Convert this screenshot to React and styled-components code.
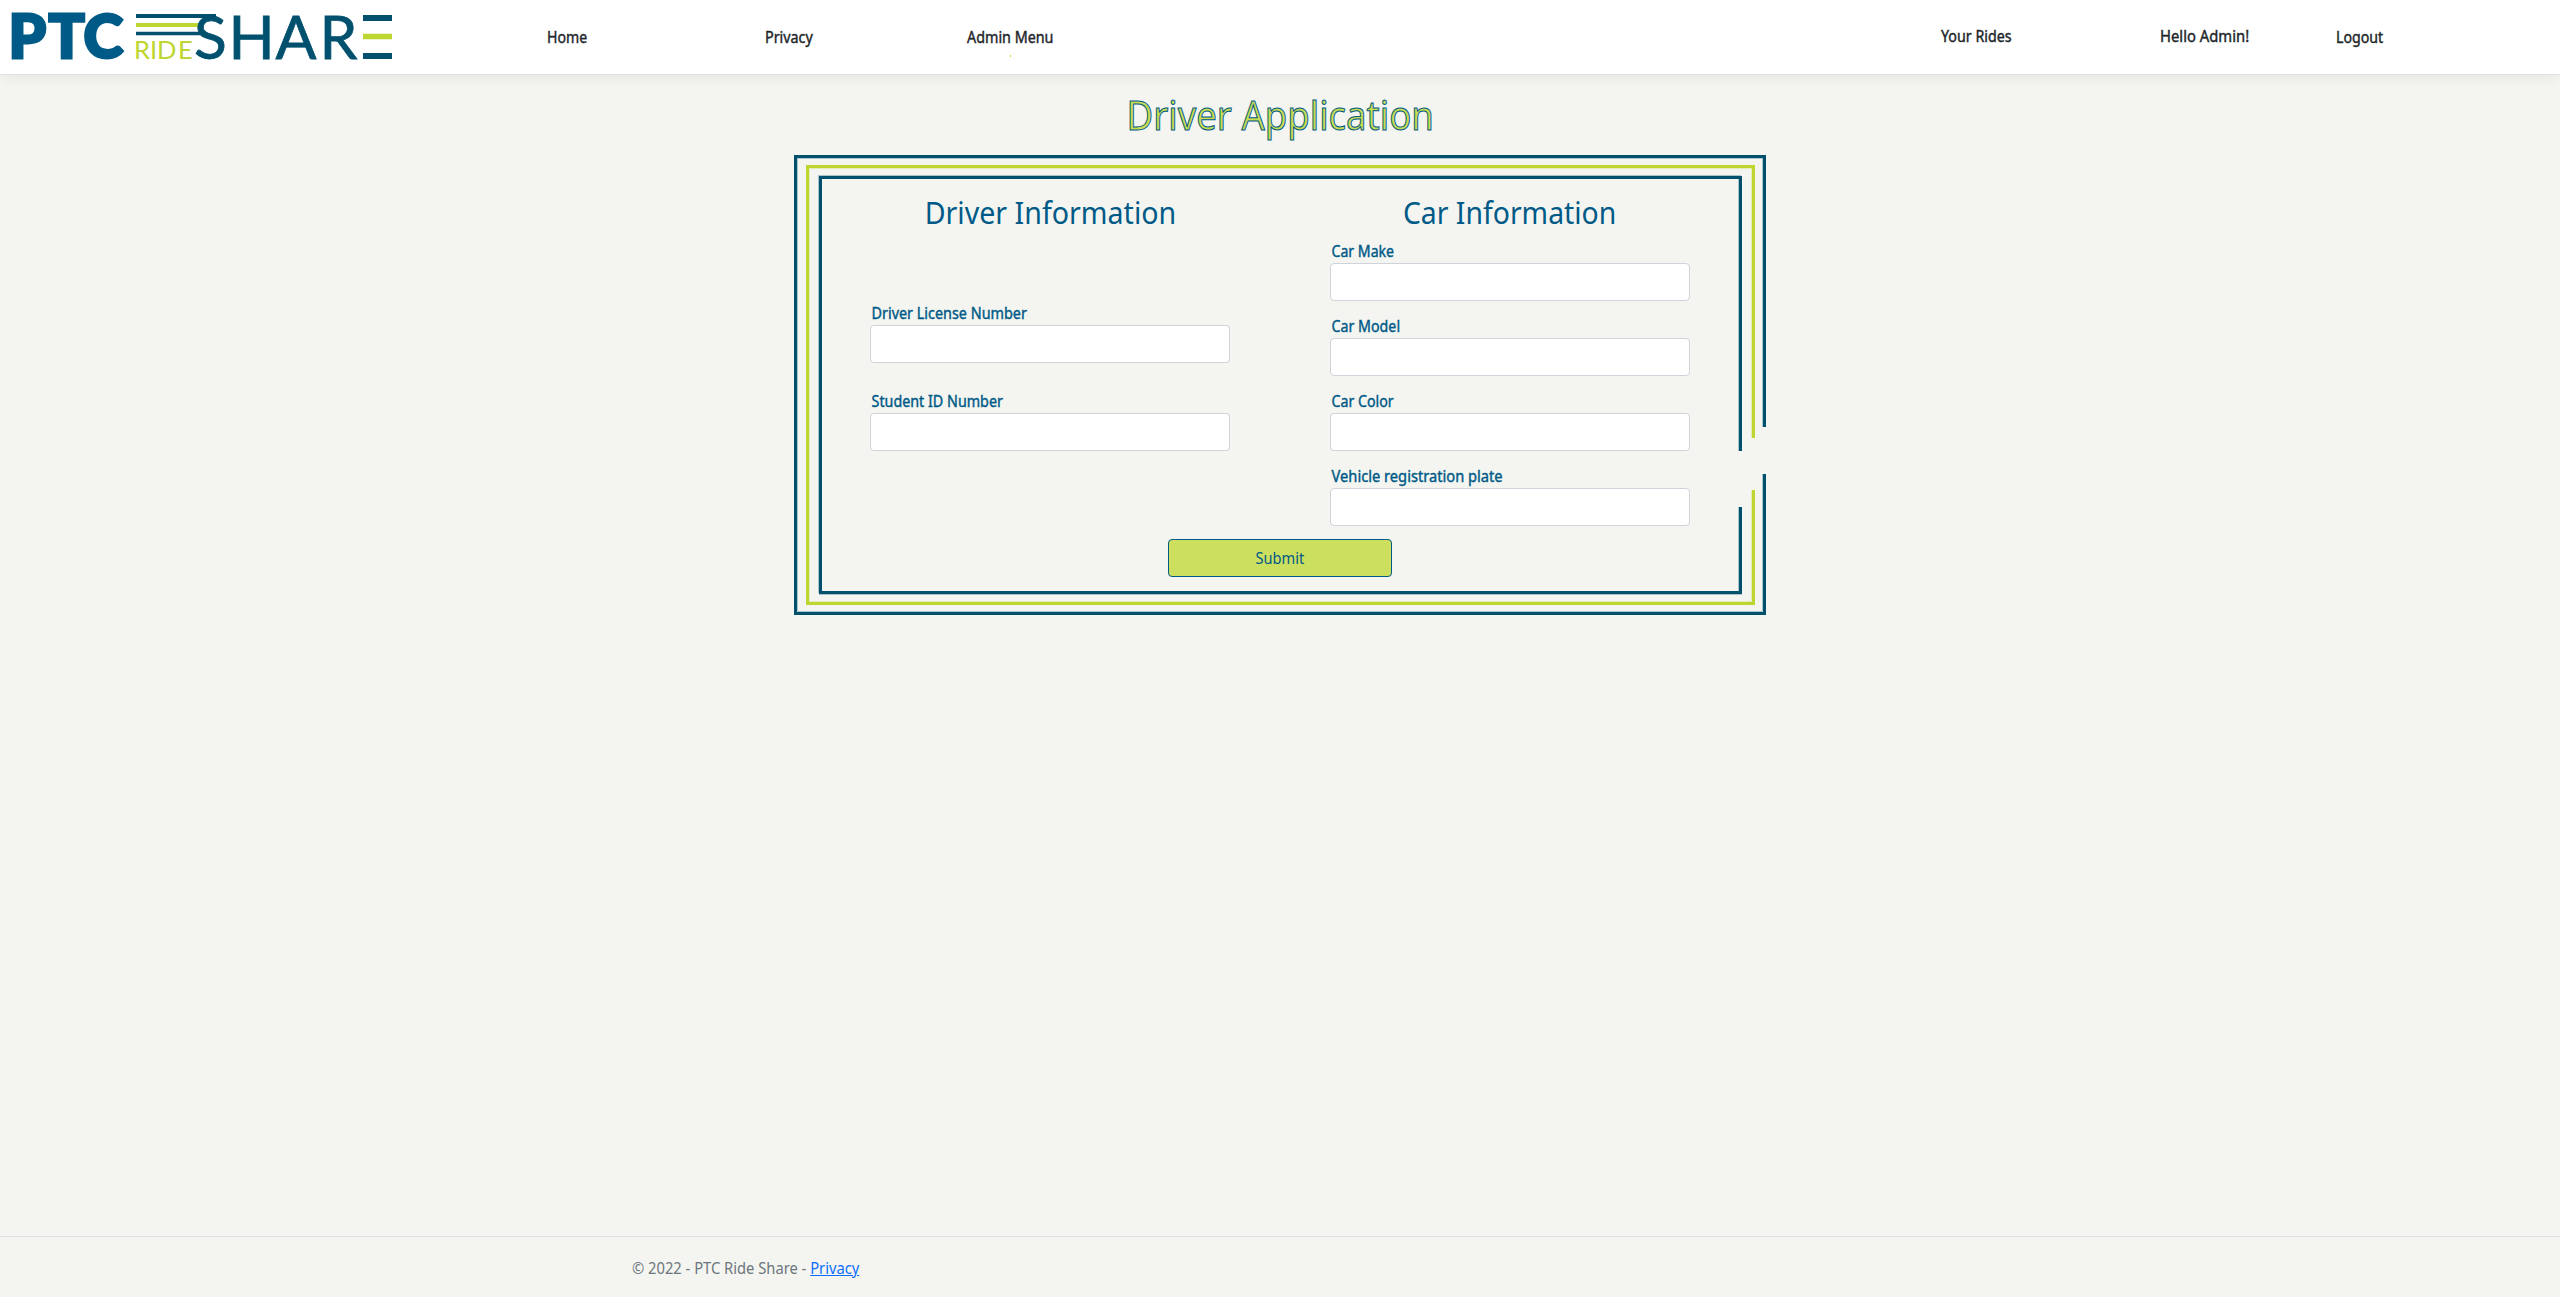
import React from "react";
import styled, { createGlobalStyle } from "styled-components";

const navy = "#00506e";
const blue = "#005a87";
const lime = "#bed62f";
const paper = "#f4f5f0";

const GlobalStyle = createGlobalStyle`
  *, *::before, *::after { box-sizing: border-box; }
  body {
    margin: 0;
    background: ${paper};
    color: #212529;
    font-family: "Noto Sans", "Open Sans", sans-serif;
    font-size: 15.5px;
    line-height: 24px;
  }
`;

const Page = styled.div`
  display: flex;
  flex-direction: column;
  height: 1297px;
`;

const Condensed = styled.span`
  display: inline-block;
  transform: scaleX(${(p) => p.$ratio});
  transform-origin: ${(p) => p.$origin || "left"} center;
  white-space: nowrap;
`;

const Header = styled.header`
  display: grid;
  grid-template-columns: 547px 218px 202px 974px 219px 176px 1fr;
  height: 75px;
  padding-top: 25px;
  background: #fff;
  border-bottom: 1px solid #dee2e6;
  box-shadow: 0 4px 12px rgba(0, 0, 0, 0.05);
`;

const Brand = styled.a`
  display: block;
  height: 74px;
  margin-top: -25px;
`;

const NavLink = styled.a`
  color: #212529;
  -webkit-text-stroke: 0.4px #212529;
  margin-top: ${(p) => (p.$raised ? -1 : 0)}px;
`;

const Caret = styled.span`
  display: block;
  width: 1px;
  height: 2px;
  margin: 6px 0 0 43px;
  background: ${lime};
`;

const Main = styled.main`
  display: flex;
  flex: 1;
  flex-direction: column;
  align-items: center;
`;

const Title = styled.h1`
  margin: 16px 0;
  height: 48px;
  color: #c8dc50;
  font-size: 39.5px;
  font-weight: 400;
  line-height: 48px;
  -webkit-text-stroke: 1px ${blue};
`;

const Rule = styled.div`
  position: relative;
  border: 3px solid ${(p) => p.$color};
  box-shadow: ${(p) => p.$edge};
  &::after {
    content: "";
    position: absolute;
    right: -4px;
    top: ${(p) => p.$gapTop}px;
    width: 6px;
    height: ${(p) => p.$gap}px;
    background: ${paper};
  }
`;

const OuterRule = styled(Rule)`
  width: 972px;
  height: 460px;
  padding: 7px 8px 7px 9px;
`;

const MiddleRule = styled(Rule)`
  height: 440px;
  padding: 8px 10px;
`;

const InnerRule = styled(Rule)`
  height: 418px;
  padding-right: 1px;
`;

const Form = styled.form`
  display: flex;
  flex-direction: column;
  align-items: center;
`;

const Columns = styled.div`
  display: grid;
  grid-template-columns: 360px 360px;
  column-gap: 100px;
  height: 360px;
  padding-top: 14px;
`;

const Column = styled.section`
  display: flex;
  flex-direction: column;
`;

const Heading = styled.h2`
  margin: 0 0 8px;
  height: 38px;
  color: ${blue};
  font-size: 31px;
  font-weight: 400;
  line-height: 38px;
  text-align: center;
`;

const Fields = styled.div`
  display: flex;
  flex-direction: column;
  gap: ${(p) => p.$gap}px;
  padding-top: ${(p) => p.$offset}px;
`;

const Field = styled.label`
  display: block;
  color: ${blue};
  text-indent: 0.6px;
  -webkit-text-stroke: 0.4px ${blue};
`;

const Input = styled.input`
  display: block;
  width: 360px;
  height: 38px;
  border: 1px solid #ced4da;
  border-radius: 4px;
  background: #fff;
`;

const Submit = styled.button`
  width: 224px;
  height: 38px;
  padding: 0;
  border: 1px solid ${blue};
  border-radius: 4px;
  background: #cddf5f;
  color: ${blue};
  font: inherit;
`;

const Footer = styled.footer`
  height: 61px;
  padding: 19px 0 0 632px;
  border-top: 1px solid #dee2e6;
  color: #6c757d;
`;

const FooterLink = styled.a`
  color: #0d6efd;
  text-decoration: underline;
`;

function Logo() {
  return (
    <svg width="400" height="74" viewBox="0 0 400 74" fontFamily="Lato, sans-serif">
      <text x="8.5 48.5 83.5" y="58.2" fontSize="60" fontWeight="900" fill={blue} stroke={blue} strokeWidth="2.8">PTC</text>
      <path d="M136 16H216" stroke={navy} strokeWidth="4" />
      <path d="M136 25H198" stroke={lime} strokeWidth="4" />
      <path d="M136 33.5H204" stroke={navy} strokeWidth="3.5" />
      <text x="134 150 157 178" y="59" fontSize="25.5" fill={lime}>RIDE</text>
      <text x="194 228.5 275.5 319.5" y="58.7" fontSize="60.5" fill={navy} stroke={navy} strokeWidth="0.8">SHAR</text>
      <path d="M363 18H392M363 56H392" stroke={navy} strokeWidth="6" />
      <path d="M363 36.5H392" stroke={lime} strokeWidth="5.5" />
    </svg>
  );
}

function NavItem({ ratio, raised, caret, children }) {
  return (
    <NavLink $raised={raised}>
      <Condensed $ratio={ratio}>{children}</Condensed>
      {caret && <Caret />}
    </NavLink>
  );
}

function TextField({ label, ratio }) {
  return (
    <Field>
      <Condensed $ratio={ratio}>{label}</Condensed>
      <Input type="text" />
    </Field>
  );
}

export default function App() {
  return (
    <Page>
      <GlobalStyle />
      <Header>
        <Brand><Logo /></Brand>
        <NavItem ratio={0.91}>Home</NavItem>
        <NavItem ratio={0.925}>Privacy</NavItem>
        <NavItem ratio={0.925} caret>Admin Menu</NavItem>
        <NavItem ratio={0.92} raised>Your Rides</NavItem>
        <NavItem ratio={0.955} raised>Hello Admin!</NavItem>
        <NavItem ratio={0.915}>Logout</NavItem>
      </Header>
      <Main>
        <Title><Condensed $ratio={0.925} $origin="center">Driver Application</Condensed></Title>
        <OuterRule $color={navy} $edge="inset 0 0 0 1px #a9c4cb" $gapTop={269} $gap={47}>
          <MiddleRule $color={lime} $edge="inset 0 0 0 1px #e3ebb8" $gapTop={270} $gap={52}>
            <InnerRule $color={navy} $edge="-1px -1px 0 0 #a9c4cb, 0 1px 0 0 #a9c4cb, inset -1px 0 0 0 #a9c4cb" $gapTop={272} $gap={56}>
              <Form>
                <Columns>
                  <Column>
                    <Heading><Condensed $ratio={0.922} $origin="center">Driver Information</Condensed></Heading>
                    <Fields $offset={62} $gap={26}>
                      <TextField label="Driver License Number" ratio={0.928} />
                      <TextField label="Student ID Number" ratio={0.923} />
                    </Fields>
                  </Column>
                  <Column>
                    <Heading><Condensed $ratio={0.915} $origin="center">Car Information</Condensed></Heading>
                    <Fields $offset={0} $gap={13}>
                      <TextField label="Car Make" ratio={0.91} />
                      <TextField label="Car Model" ratio={0.918} />
                      <TextField label="Car Color" ratio={0.915} />
                      <TextField label="Vehicle registration plate" ratio={0.946} />
                    </Fields>
                  </Column>
                </Columns>
                <Submit type="button"><Condensed $ratio={0.94} $origin="center">Submit</Condensed></Submit>
              </Form>
            </InnerRule>
          </MiddleRule>
        </OuterRule>
      </Main>
      <Footer>
        <Condensed $ratio={0.95}>© 2022 - PTC Ride Share - <FooterLink>Privacy</FooterLink></Condensed>
      </Footer>
    </Page>
  );
}
